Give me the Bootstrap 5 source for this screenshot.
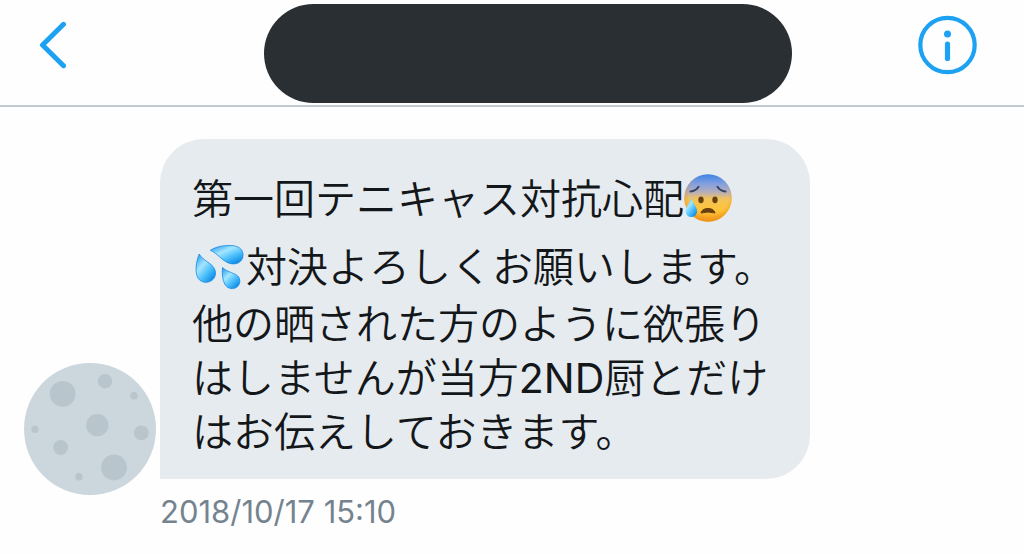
<!DOCTYPE html>
<html lang="ja">
<head>
<meta charset="utf-8">
<meta name="viewport" content="width=device-width, initial-scale=1">
<title>メッセージ</title>
<link href="https://cdn.jsdelivr.net/npm/bootstrap@5.3.0/dist/css/bootstrap.min.css" rel="stylesheet">
<style>
  body { font-family: Inter, "Noto Sans CJK JP", sans-serif; color: #14171a; background: #fefefe; }
  .topbar { border-bottom: 2px solid #c0cad2; padding: 4px 46px 2px 38px; }
  .topbar .btn { color: #1da1f2; padding: 0 0 18px; }
  .back-btn { width: 100px; }
  .name-pill { flex: 0 1 528px; height: 99px; background: #292f33; }
  .thread { padding: 32px 24px 24px; }
  .avatar { width: 132px; margin: 0 4px 34px 0; }
  .bubble { width: 650px; max-width: 100%; padding: 22px 20px 20px 32px; border-radius: 44px 44px 44px 0; background: #e6ebef; font-size: 41px; line-height: 54px; font-weight: 350; }
  .first-line { line-height: 76px; }
  .second-line { line-height: 60px; }
  .emoji { vertical-align: middle; margin-top: -5px; margin-bottom: 5px; overflow: visible; }
  .stamp { font-size: 31px; line-height: 34px; margin-top: 16px; color: #75838f; }
</style>
</head>
<body>
<header class="topbar d-flex align-items-center justify-content-between">
  <button type="button" class="btn back-btn border-0 text-start" aria-label="戻る">
    <svg width="28" height="50" viewBox="0 0 28 50" fill="none" stroke="currentColor" stroke-width="5" stroke-linecap="round" stroke-linejoin="round" class="d-block"><path d="M25.500 4.300 4.500 25 25.500 45.700"/></svg>
  </button>
  <div class="name-pill rounded-pill"></div>
  <button type="button" class="btn border-0" aria-label="詳細">
    <svg width="60" height="60" viewBox="0 0 60 60" fill="none" stroke="currentColor" class="d-block"><circle cx="29.500" cy="30" r="27.200" stroke-width="4.200"/><circle cx="29.500" cy="19" r="3.500" fill="currentColor" stroke="none"/><path d="M29.500 29v14.500" stroke-width="5.200" stroke-linecap="round"/></svg>
  </button>
</header>
<main class="thread d-flex align-items-end">
  <svg class="avatar flex-shrink-0" viewBox="0 0 132 132" role="img" aria-label="アイコン">
    <circle cx="66" cy="66" r="66" fill="#ccd6dd"/>
    <g fill="#b8c5cd"><circle cx="38.7" cy="30.8" r="12.9"/><circle cx="81" cy="18.2" r="7.2"/><circle cx="110" cy="32.8" r="3.8"/><circle cx="11" cy="66.2" r="3.7"/><circle cx="73.3" cy="62.2" r="11.1"/><circle cx="117.3" cy="69.8" r="7.4"/><circle cx="36.7" cy="84.5" r="7.4"/><circle cx="90" cy="104.5" r="12.9"/><circle cx="55" cy="113.8" r="3.8"/></g>
  </svg>
  <div class="flex-grow-1">
    <p class="bubble mb-0">
      <span class="d-block first-line">第一回テニキャス対抗心配<svg class="emoji" width="50" height="50" viewBox="0 0 50 50" role="img" aria-label="冷や汗">
        <defs>
          <linearGradient id="skin" x2="0" y2="1"><stop offset="0" stop-color="#3f83e6"/><stop offset=".2" stop-color="#829fe0"/><stop offset=".38" stop-color="#b8aeb8"/><stop offset=".52" stop-color="#f2c35c"/><stop offset=".75" stop-color="#ffc438"/><stop offset="1" stop-color="#f39a1d"/></linearGradient>
          <radialGradient id="rim" gradientUnits="userSpaceOnUse" cx="25" cy="22" r="27"><stop offset=".75" stop-color="#e98b12" stop-opacity="0"/><stop offset="1" stop-color="#e98b12" stop-opacity=".6"/></radialGradient>
          <linearGradient id="water" x2=".8" y2="1"><stop offset="0" stop-color="#1593ee"/><stop offset=".4" stop-color="#a5e6ff"/><stop offset=".68" stop-color="#4cc0fb"/><stop offset="1" stop-color="#0b86e3"/></linearGradient>
        </defs>
        <circle cx="24" cy="25" r="23.8" fill="url(#skin)"/>
        <circle cx="24" cy="25" r="23.8" fill="url(#rim)"/>
        <g fill="none" stroke="#38445f" stroke-width="2" stroke-linecap="round"><path d="M6.500 18.500Q12 18 14.500 13.800M33.500 13.800Q36 18 41.500 18.500"/></g>
        <g fill="#66400f"><ellipse cx="17" cy="26.8" rx="2.7" ry="3.4"/><ellipse cx="31" cy="26.8" rx="2.7" ry="3.4"/></g>
        <path d="M17 40Q18 35.500 24 35.500T31 40Q24 38 17 40Z" fill="#66400f" stroke="#66400f" stroke-linejoin="round"/>
        <path d="M7.300 24.500C6 30.500 1.500 33.500 1.500 38.300a5.800 5.800 0 0 0 11.600 0C13.100 33.500 8.600 30.500 7.300 24.500Z" fill="url(#water)"/>
      </svg></span>
      <span class="d-block second-line"><svg class="emoji" width="54" height="50" viewBox="0 0 54 50" role="img" aria-label="汗">
        <g fill="url(#water)" stroke="#168ae4" stroke-width=".8" stroke-linejoin="round" transform="translate(1 1)">
          <path d="M17.300 8.300C24 4 33 3 40 3.700c7 .7 10.500 4.800 10 10.200-.5 5.700-6 8.900-12 7.800C30 20.300 25 11.500 17.300 8.300Z"/>
          <path d="M6.200 12C3 20 2 29 4.300 34.600c2 5 7.700 7.200 13 4.700 5-2.300 6.600-8 3.900-13C18.500 21 10.500 19 6.200 12Z"/>
          <path d="M29.500 25.500c-.6 6 0 12.500 2.200 16.500 2 4 6.800 5.800 11 3.800 4-2 5.300-6.800 3-10.700C43 31 34.500 30.500 29.500 25.500Z"/>
        </g>
      </svg>対決よろしくお願いします。</span>
      <span class="d-block">他の晒された方のように欲張り</span>
      <span class="d-block">はしませんが当方<span class="fw-normal">2ND</span>厨とだけ</span>
      <span class="d-block">はお伝えしておきます。</span>
    </p>
    <time class="stamp d-block" datetime="2018-10-17T15:10">2018/10/17 15:10</time>
  </div>
</main>
<script src="https://cdn.jsdelivr.net/npm/bootstrap@5.3.0/dist/js/bootstrap.bundle.min.js"></script>
</body>
</html>
